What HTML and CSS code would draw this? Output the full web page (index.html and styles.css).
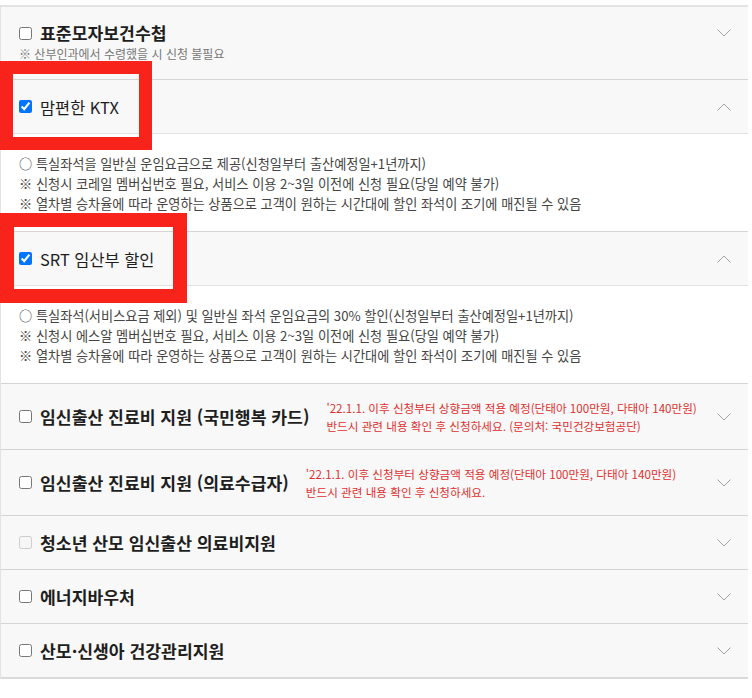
FILE: index.html
```html
<!DOCTYPE html>
<html lang="ko">
<head>
<meta charset="utf-8">
<link rel="stylesheet" href="styles.css">
</head>
<body>
<div class="page">
  <ul class="list">
    <li class="item">
      <div class="head head-note">
        <div class="line">
          <input type="checkbox" class="chk">
          <span class="title bold">표준모자보건수첩</span>
          <span class="chev"><svg width="14" height="8" viewBox="0 0 14 8"><polyline points="0.5,0.5 7,7 13.5,0.5" fill="none" stroke="#a3a3a3" stroke-width="1"/></svg></span>
        </div>
        <p class="sub">※ 산부인과에서 수령했을 시 신청 불필요</p>
      </div>
    </li>
    <li class="item">
      <div class="head">
        <input type="checkbox" class="chk" checked>
        <span class="title">맘편한 KTX</span>
        <span class="chev"><svg width="14" height="8" viewBox="0 0 14 8"><polyline points="0.5,7.5 7,1 13.5,7.5" fill="none" stroke="#a3a3a3" stroke-width="1"/></svg></span>
      </div>
      <div class="body">
        <p>○ 특실좌석을 일반실 운임요금으로 제공(신청일부터 출산예정일+1년까지)</p>
        <p>※ 신청시 코레일 멤버십번호 필요, 서비스 이용 2~3일 이전에 신청 필요(당일 예약 불가)</p>
        <p>※ 열차별 승차율에 따라 운영하는 상품으로 고객이 원하는 시간대에 할인 좌석이 조기에 매진될 수 있음</p>
      </div>
    </li>
    <li class="item">
      <div class="head">
        <input type="checkbox" class="chk" checked>
        <span class="title">SRT 임산부 할인</span>
        <span class="chev"><svg width="14" height="8" viewBox="0 0 14 8"><polyline points="0.5,7.5 7,1 13.5,7.5" fill="none" stroke="#a3a3a3" stroke-width="1"/></svg></span>
      </div>
      <div class="body">
        <p>○ 특실좌석(서비스요금 제외) 및 일반실 좌석 운임요금의 30% 할인(신청일부터 출산예정일+1년까지)</p>
        <p>※ 신청시 에스알 멤버십번호 필요, 서비스 이용 2~3일 이전에 신청 필요(당일 예약 불가)</p>
        <p>※ 열차별 승차율에 따라 운영하는 상품으로 고객이 원하는 시간대에 할인 좌석이 조기에 매진될 수 있음</p>
      </div>
    </li>
    <li class="item">
      <div class="head head-red">
        <input type="checkbox" class="chk">
        <span class="title bold">임신출산 진료비 지원 (국민행복 카드)</span>
        <span class="red">'22.1.1. 이후 신청부터 상향금액 적용 예정(단태아 100만원, 다태아 140만원)<br>반드시 관련 내용 확인 후 신청하세요. (문의처: 국민건강보험공단)</span>
        <span class="chev"><svg width="14" height="8" viewBox="0 0 14 8"><polyline points="0.5,0.5 7,7 13.5,0.5" fill="none" stroke="#a3a3a3" stroke-width="1"/></svg></span>
      </div>
    </li>
    <li class="item">
      <div class="head head-red">
        <input type="checkbox" class="chk">
        <span class="title bold">임신출산 진료비 지원 (의료수급자)</span>
        <span class="red">'22.1.1. 이후 신청부터 상향금액 적용 예정(단태아 100만원, 다태아 140만원)<br>반드시 관련 내용 확인 후 신청하세요.</span>
        <span class="chev"><svg width="14" height="8" viewBox="0 0 14 8"><polyline points="0.5,0.5 7,7 13.5,0.5" fill="none" stroke="#a3a3a3" stroke-width="1"/></svg></span>
      </div>
    </li>
    <li class="item">
      <div class="head">
        <input type="checkbox" class="chk" disabled>
        <span class="title bold">청소년 산모 임신출산 의료비지원</span>
        <span class="chev"><svg width="14" height="8" viewBox="0 0 14 8"><polyline points="0.5,0.5 7,7 13.5,0.5" fill="none" stroke="#a3a3a3" stroke-width="1"/></svg></span>
      </div>
    </li>
    <li class="item">
      <div class="head">
        <input type="checkbox" class="chk">
        <span class="title bold">에너지바우처</span>
        <span class="chev"><svg width="14" height="8" viewBox="0 0 14 8"><polyline points="0.5,0.5 7,7 13.5,0.5" fill="none" stroke="#a3a3a3" stroke-width="1"/></svg></span>
      </div>
    </li>
    <li class="item last">
      <div class="head">
        <input type="checkbox" class="chk">
        <span class="title bold">산모·신생아 건강관리지원</span>
        <span class="chev"><svg width="14" height="8" viewBox="0 0 14 8"><polyline points="0.5,0.5 7,7 13.5,0.5" fill="none" stroke="#a3a3a3" stroke-width="1"/></svg></span>
      </div>
    </li>
  </ul>
  <div class="mark mark-ktx"></div>
  <div class="mark mark-srt"></div>
</div>
</body>
</html>
```
FILE: styles.css
```css
html, body {
  margin: 0;
  padding: 0;
  background: #ffffff;
}
body {
  font-family: "Noto Sans CJK KR", "Noto Sans", sans-serif;
  color: #222;
}
.page {
  position: relative;
  width: 752px;
  height: 698px;
  overflow: hidden;
}
.list {
  list-style: none;
  margin: 5px 0 0 0;
  padding: 0;
  width: 748px;
  border-top: 2px solid #e3e3e3;
  border-left: 1px solid #e3e3e3;
  box-sizing: border-box;
}
.item {
  border-bottom: 1px solid #d4d4d4;
}
.item.last {
  border-bottom: 2px solid #dadada;
}
.head {
  display: flex;
  align-items: center;
  height: 53px;
  padding: 0 17px 0 18px;
  background: #f8f8f8;
}
.head-note {
  display: block;
  height: auto;
  padding: 15px 17px 16px 18px;
}
.head-note .line {
  display: flex;
  align-items: center;
  height: 22px;
}
.head-red {
  height: 65px;
}
.chk {
  width: 13px;
  height: 13px;
  margin: 0 8px 0 0;
  flex: none;
}
.title {
  font-size: 16.4px;
  line-height: 22px;
  font-weight: 400;
  color: #1e1e1e;
  white-space: nowrap;
}
.title.bold {
  font-size: 17.2px;
  font-weight: 700;
}
.chev {
  margin-left: auto;
  display: flex;
  width: 14px;
  height: 8px;
}
.chev svg {
  display: block;
}
.sub {
  margin: 1px 0 0 0;
  font-size: 12px;
  line-height: 18px;
  color: #777;
  white-space: nowrap;
}
.red {
  margin-left: 17px;
  font-size: 11.6px;
  line-height: 18px;
  color: #de3030;
  white-space: nowrap;
}
.body {
  border-top: 1px solid #e2e2e2;
  padding: 20px 18px 17px 18px;
  background: #fff;
}
.body p {
  margin: 0;
  font-size: 13.2px;
  line-height: 20px;
  color: #444;
  white-space: nowrap;
}
.mark {
  position: absolute;
  left: 0;
  border: 13px solid #f8231a;
  box-sizing: border-box;
}
.mark-ktx {
  top: 61px;
  width: 152px;
  height: 89px;
}
.mark-srt {
  top: 213px;
  width: 187px;
  height: 90px;
  border-width: 14px;
}
```
